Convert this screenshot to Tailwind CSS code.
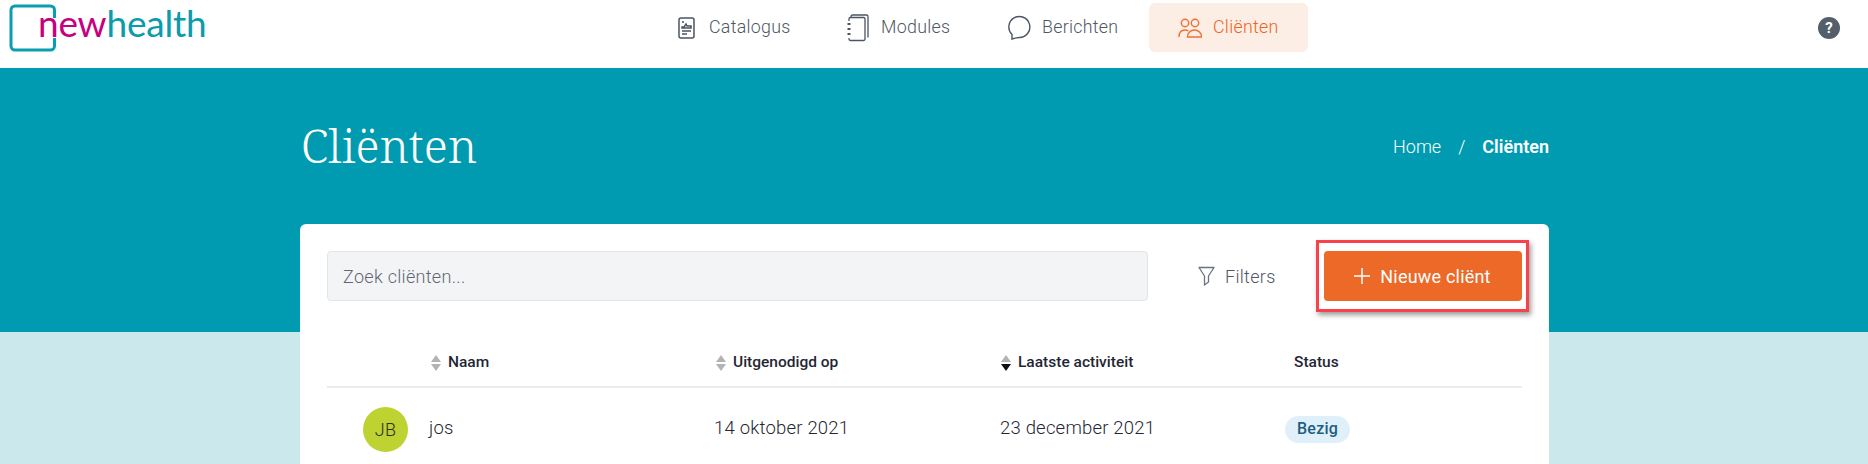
<!DOCTYPE html>
<html>
	<head>
		<meta charset="UTF-8" />
		<title>Cliënten</title>
		<script src="https://cdn.jsdelivr.net/npm/@tailwindcss/browser@4"></script>
	</head>
	<body class="h-[464px] overflow-hidden bg-[#cbe9ec] font-['Roboto',sans-serif] text-[#1f2733]">
		<!-- top bar -->
		<header class="flex h-[68px] items-start bg-white">
			<div class="relative ml-[9px] h-[52px] w-[210px] shrink-0">
				<svg class="mt-[4px]" width="48" height="48" viewBox="0 0 48 48" fill="none" stroke="#0a9fb0" stroke-width="3">
					<path d="M45.500 14V6a4 4 0 0 0-4-4H6a4 4 0 0 0-4 4v36a4 4 0 0 0 4 4h35.500a4 4 0 0 0 4-4v-8" />
				</svg>
				<p class="absolute -top-[1px] left-[29px] font-['Lato',sans-serif] text-[37px] leading-[48px] tracking-[-0.2px]"><span class="text-[#c6007e]">new</span><span class="text-[#0a9bad]">health</span></p>
			</div>
			<nav class="ml-[450px] mt-[3px] flex h-[49px] items-center text-[17.800px] font-light tracking-[0.3px] text-[#4f5763]">
				<a class="flex w-[178px] items-center pl-[9px]">
					<svg class="mr-[13px]" width="18" height="22" viewBox="0 0 18 22" fill="none" stroke="#4b5563" stroke-width="1.500">
						<rect x="1" y="1" width="15" height="20" rx="2" />
						<path d="M4 5h2M9 9l-1-2-2 3H4v1h9V9zM4 14h9M4 17h5" />
					</svg>
					Catalogus
				</a>
				<a class="flex w-[161px] items-center">
					<svg class="mr-[12px]" width="22" height="28" viewBox="0 0 22 28" fill="none" stroke="#4b5563" stroke-width="1.300">
						<path d="M4 3V2.500A1.500 1.500 0 0 1 5.500 1h14A1.500 1.500 0 0 1 21 2.500v21" />
						<path d="M2 7V5a1.500 1.500 0 0 1 1.500-1.500h13A1.500 1.500 0 0 1 18 5v20a1.500 1.500 0 0 1-1.500 1.500h-13A1.500 1.500 0 0 1 2 25v-1" />
						<path d="M0.500 10h3M0.500 15h3M0.500 20h3" stroke-width="2" />
					</svg>
					Modules
				</a>
				<a class="flex w-[141px] items-center">
					<svg class="mr-[11px]" width="23" height="26" viewBox="0 0 23 26" fill="none" stroke="#4b5563" stroke-width="1.400">
						<path d="M4 24v-4.500A10.500 10.500 0 1 1 11.500 22.500C9 22.500 7 23 4 24z" />
					</svg>
					Berichten
				</a>
				<a class="flex h-[49px] w-[159px] items-center rounded-md bg-[#fdeee5] pl-[29px] text-[#ec6520]">
					<svg class="mr-[11px]" width="24" height="20" viewBox="0 0 24 20" fill="none" stroke="#ee6f35" stroke-width="1.400">
						<circle cx="7" cy="5" r="3.700" />
						<circle cx="17" cy="5" r="3.700" />
						<path d="M1 19c0-4 2-7 6-7 1.500 0 2.500.4 3.500 1" />
						<path d="M9.500 19c0-4 3-7 7-7s7 3 7 7z" />
					</svg>
					Cliënten
				</a>
			</nav>
			<div class="ml-auto mr-[28px] mt-[17px] flex h-[22px] w-[22px] items-center justify-center rounded-full bg-[#555f6b] text-[15px] font-bold text-white">?</div>
		</header>

		<!-- hero -->
		<section class="h-[264px] bg-[#009bb0]">
			<div class="ml-[300px] flex w-[1249px] items-center justify-between pl-px pt-[44px] text-white">
				<h1 class="font-['Noto_Serif','DejaVu_Serif',serif] text-[46.500px] font-light leading-[66px]">Cliënten</h1>
				<p class="mt-[2px] flex items-center text-[18px]">
					<span class="font-light">Home</span>
					<span class="mx-[17px] font-light">/</span>
					<span class="font-semibold">Cliënten</span>
				</p>
			</div>
		</section>

		<!-- card -->
		<main class="-mt-[108px] ml-[300px] h-[240px] w-[1249px] rounded-t-md bg-white px-[27px] pt-[16px]">
			<div class="flex items-center">
				<input class="h-[50px] w-[821px] shrink-0 rounded-[4px] border border-[#e2e5e9] bg-[#f3f4f6] px-[15px] text-[18px] font-light tracking-[0.3px] placeholder:text-[#5f6773]" placeholder="Zoek cliënten..." />
				<button class="ml-[50px] flex items-center text-[18px] font-light tracking-[0.3px] text-[#4f5763]">
					<svg class="mr-[10px]" width="17" height="20" viewBox="0 0 17 20" fill="none" stroke="#6b7280" stroke-width="1.300">
						<path d="M1 1.500h15L10.500 10v6l-4 3v-9z" stroke-linejoin="round" />
					</svg>
					Filters
				</button>
				<div class="ml-auto -mr-[7px] flex h-[72px] w-[213px] shrink-0 items-center justify-center border-[3px] border-[#f8414b] shadow-[2px_3px_5px_rgba(0,0,0,0.4)]">
					<button class="flex h-[50px] w-[198px] items-center justify-center rounded-[4px] bg-[#ec6927] text-[18px] tracking-[0.2px] text-white">
						<svg class="mr-[10px]" width="16" height="16" viewBox="0 0 16 16" fill="none" stroke="#fff" stroke-width="1.500">
							<path d="M8 0v16M0 8h16" />
						</svg>
						Nieuwe cliënt
					</button>
				</div>
			</div>

			<div class="mt-[29px] grid h-[47px] grid-cols-[100px_287px_286px_285px_1fr] items-center border-b-2 border-[#e8edf2] pb-[2px] text-[15.500px] font-medium text-[#1f2733]">
				<span></span>
				<span class="flex items-center pl-[4px]">
					<svg class="mr-[7px]" width="10" height="16" viewBox="0 0 10 16" fill="#b3b3b3"><path d="M5 0l5 7H0zM5 16L0 9h10z" /></svg>
					Naam
				</span>
				<span class="flex items-center pl-[2px]">
					<svg class="mr-[7px]" width="10" height="16" viewBox="0 0 10 16" fill="#b3b3b3"><path d="M5 0l5 7H0zM5 16L0 9h10z" /></svg>
					Uitgenodigd op
				</span>
				<span class="flex items-center pl-[1px]">
					<svg class="mr-[7px]" width="10" height="16" viewBox="0 0 10 16" fill="#b3b3b3"><path d="M5 0l5 7H0z" /><path d="M5 16L0 9h10z" fill="#111" /></svg>
					Laatste activiteit
				</span>
				<span class="pl-[9px]">Status</span>
			</div>

			<div class="grid h-[82px] grid-cols-[100px_287px_286px_285px_1fr] items-center text-[18.500px] font-light tracking-[0.2px]">
				<span class="pl-[36px]">
					<span class="flex h-[45px] w-[45px] items-center justify-center rounded-full bg-[#bed232] text-[18px] text-[#2b3020]">JB</span>
				</span>
				<span class="pl-[2px]">jos</span>
				<span>14 oktober 2021</span>
				<span>23 december 2021</span>
				<span>
					<span class="inline-flex h-[27px] w-[65px] items-center justify-center rounded-full bg-[#e0f0fa] text-[16px] font-medium text-[#1b5e80]">Bezig</span>
				</span>
			</div>
		</main>
	</body>
</html>
